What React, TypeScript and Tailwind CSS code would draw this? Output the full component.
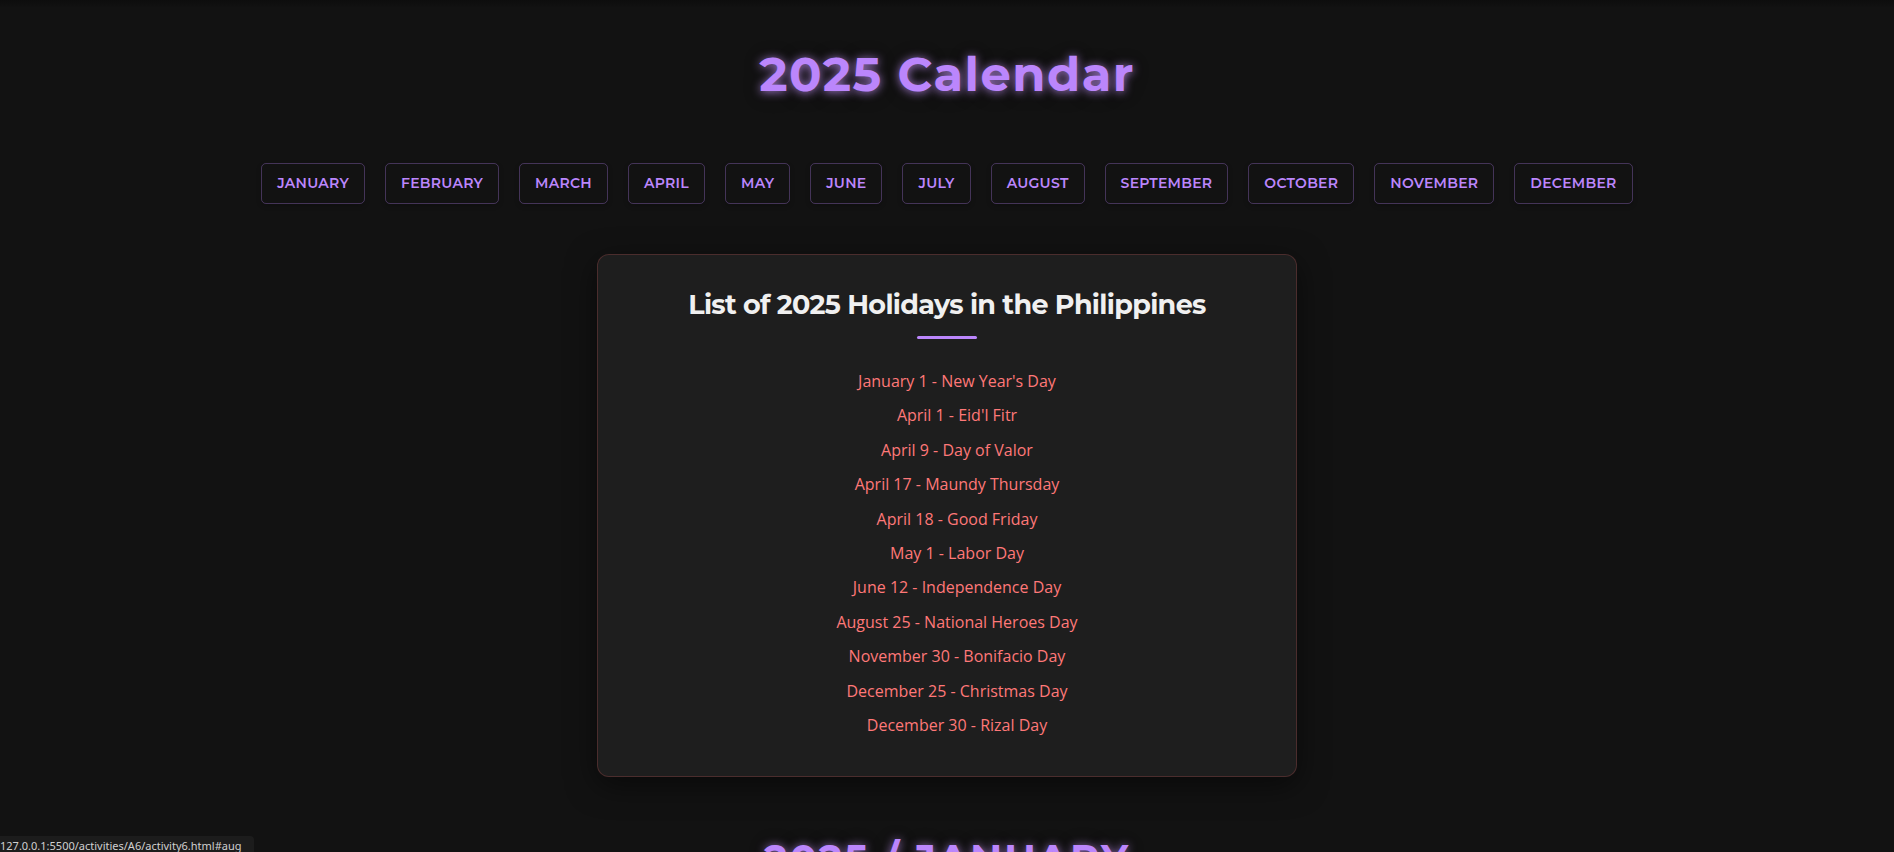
const months = [
  "January", "February", "March", "April", "May", "June",
  "July", "August", "September", "October", "November", "December",
];

const holidays = [
  "January 1 - New Year's Day",
  "April 1 - Eid'l Fitr",
  "April 9 - Day of Valor",
  "April 17 - Maundy Thursday",
  "April 18 - Good Friday",
  "May 1 - Labor Day",
  "June 12 - Independence Day",
  "August 25 - National Heroes Day",
  "November 30 - Bonifacio Day",
  "December 25 - Christmas Day",
  "December 30 - Rizal Day",
];

const glow =
  "text-center font-['Montserrat','Inter',sans-serif] font-bold text-[#bb86fc] [text-shadow:0_1px_10px_rgba(200,150,252,0.8),0_2px_20px_rgba(0,0,0,0.3)]";

export default function App() {
  return (
    <div className="h-screen overflow-hidden bg-[#121212] bg-[linear-gradient(#0d0d0d,#121212_8px)] font-['Open_Sans',sans-serif] text-[#f0f0f0]">
      <header className="pt-[45px]">
        <h1 className={`${glow} text-5xl/[58px] tracking-[0.03em]`}>2025 Calendar</h1>
      </header>

      <nav aria-label="Months" className="mt-[60px] flex flex-wrap justify-center gap-5 px-5">
        {months.map((month) => (
          <a
            key={month}
            href={`#${month.slice(0, 3).toLowerCase()}`}
            className="rounded-[5px] border border-[#bb86fc]/30 px-[15px] py-2 font-['Montserrat','Inter',sans-serif] text-sm/[23px] font-semibold uppercase tracking-[0.02em] text-[#bb86fc] shadow-[0_2px_5px_rgba(0,0,0,0.2)]"
          >
            {month}
          </a>
        ))}
      </nav>

      <main>
        <section className="mx-auto mt-[50px] flex min-h-[523px] w-full max-w-[700px] flex-col rounded-xl border border-[#ff6b6b]/20 bg-[#1e1e1e] px-8 pb-[37px] pt-8 shadow-[0_8px_30px_rgba(0,0,0,0.5)]">
          <h2 className="text-center font-['Montserrat','Inter',sans-serif] text-[27px]/9 font-bold tracking-tight">
            List of 2025 Holidays in the Philippines
          </h2>
          <div className="mx-auto mt-[13px] h-[3px] w-[60px] rounded-sm bg-[#bb86fc]" />
          <ul className="mt-7 flex flex-1 flex-col justify-between pl-5 text-center text-base/7 text-[#ff7878]">
            {holidays.map((holiday) => (
              <li key={holiday}>{holiday}</li>
            ))}
          </ul>
        </section>

        <section id="jan" className="mt-[58px]">
          <h2 className={`${glow} text-[40px]/[48px] tracking-[2px]`}>2025 / JANUARY</h2>
        </section>
      </main>

      <div className="fixed bottom-0 left-0 h-4 overflow-hidden rounded-tr bg-[#1c1c1c] pr-3 font-['Noto_Sans','Open_Sans',sans-serif] text-[11px]/5 text-[#d0d0d0]">
        127.0.0.1:5500/activities/A6/activity6.html#aug
      </div>
    </div>
  );
}
